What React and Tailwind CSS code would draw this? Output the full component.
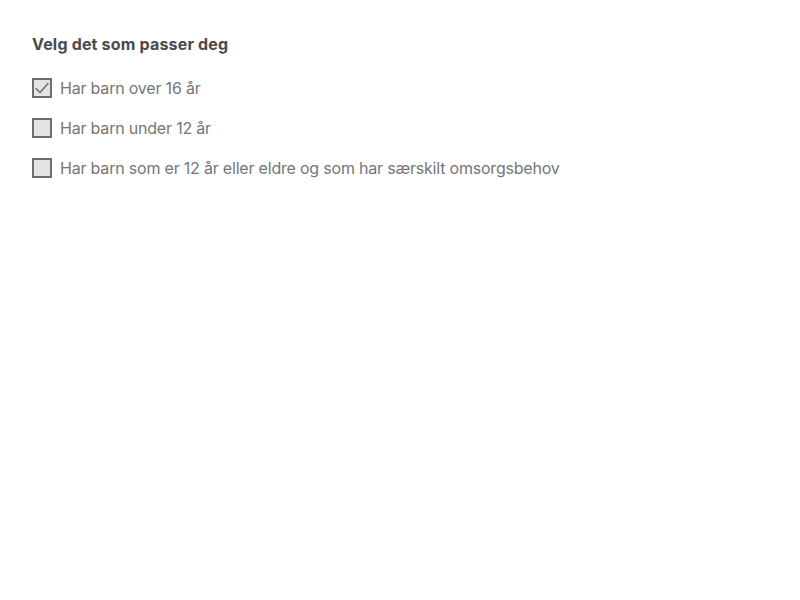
import React from "react";

const items = [
  { label: "Har barn over 16 år", checked: true },
  { label: "Har barn under 12 år", checked: false },
  { label: "Har barn som er 12 år eller eldre og som har særskilt omsorgsbehov", checked: false },
];

export default function App() {
  return (
    <div className="min-h-screen bg-white px-8 pt-8" style={{ fontFamily: "Inter, 'Noto Sans', sans-serif" }}>
      <h2 className="text-base font-bold text-[#4a4a4a] leading-6 tracking-[0.18px]">Velg det som passer deg</h2>
      <div className="mt-[22px] flex flex-col gap-5">
        {items.map((it) => (
          <label key={it.label} className="flex items-center gap-2 h-5">
            <span className="w-5 h-5 box-border border-2 border-[#6e6e6e] bg-[#e4e4e4] flex items-center justify-center">
              {it.checked && (
                <svg width="16" height="16" viewBox="0 0 16 16" fill="none">
                  <path d="M2 8.5 L6 12.5 L14 3.5" stroke="#707070" strokeWidth="1.6" strokeLinecap="round" strokeLinejoin="round" />
                </svg>
              )}
            </span>
            <span className="text-base text-[#767676] leading-6 tracking-[-0.2px]">{it.label}</span>
          </label>
        ))}
      </div>
    </div>
  );
}
